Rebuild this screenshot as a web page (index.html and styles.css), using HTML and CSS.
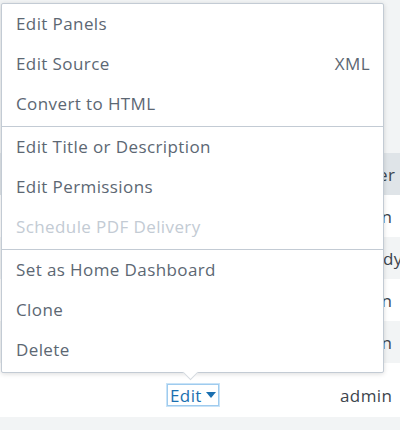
FILE: index.html
```html
<!DOCTYPE html>
<html>
<head>
<meta charset="utf-8">
<link rel="stylesheet" href="styles.css">
</head>
<body>
<div class="page">
  <div class="table">
    <div class="top-band"></div>
    <div class="row head"><span class="c1"></span><span class="c2">Owner</span></div>
    <div class="row"><span class="c1"></span><span class="c2">admin</span></div>
    <div class="row alt"><span class="c1"></span><span class="c2">nobody</span></div>
    <div class="row"><span class="c1"></span><span class="c2">admin</span></div>
    <div class="row alt"><span class="c1"></span><span class="c2">admin</span></div>
    <div class="row last"><span class="c1"><span class="edit-btn">Edit <span class="caret"></span></span></span><span class="c2">admin</span></div>
    <div class="row alt"></div>
  </div>

  <div class="menu">
    <div class="section">
      <div class="item">Edit Panels</div>
      <div class="item"><span>Edit Source</span><span class="hint">XML</span></div>
      <div class="item">Convert to HTML</div>
    </div>
    <div class="section">
      <div class="item">Edit Title or Description</div>
      <div class="item">Edit Permissions</div>
      <div class="item disabled">Schedule PDF Delivery</div>
    </div>
    <div class="section">
      <div class="item">Set as Home Dashboard</div>
      <div class="item">Clone</div>
      <div class="item">Delete</div>
    </div>
    <div class="arrow"></div>
  </div>
</div>
</body>
</html>
```

FILE: styles.css
```css
html, body {
  margin: 0;
  padding: 0;
  background: #ffffff;
}
body {
  font-family: "Open Sans", "Lato", sans-serif;
  font-size: 17px;
  letter-spacing: 0.4px;
  color: #5c6773;
  overflow: hidden;
}
.page {
  position: relative;
  width: 400px;
  height: 430px;
  overflow: hidden;
}
.table {
  display: flex;
  flex-direction: column;
}
.top-band {
  height: 153px;
  background: #f2f4f5;
}
.row {
  height: 42px;
  display: flex;
  align-items: center;
  background: #ffffff;
  white-space: nowrap;
}
.row.alt { background: #f2f4f5; }
.row.head { background: #dfe4e8; }
.row.last {
  height: 54px;
  box-sizing: border-box;
  padding-top: 10px;
}
.c1 {
  width: 340px;
  flex: none;
}
.row.last .c1 {
  padding-left: 167px;
  box-sizing: border-box;
}
.c2 {
  color: #3c444d;
}
.edit-btn {
  display: inline-flex;
  align-items: center;
  gap: 3px;
  color: #1a6fb0;
  padding: 0 2px;
  height: 20px;
  border: 1px solid #9fcbee;
  box-shadow: 0 0 0 1px #c9e3f7;
}
.caret {
  width: 0;
  height: 0;
  border-left: 5px solid transparent;
  border-right: 5px solid transparent;
  border-top: 6px solid #1a6fb0;
  margin-left: 1px;
}
.menu {
  position: absolute;
  left: 1px;
  top: 3px;
  width: 381px;
  background: #ffffff;
  border: 1px solid #c3cbd4;
  border-radius: 2px;
  box-shadow: 0 1px 5px rgba(0, 0, 0, 0.14);
}
.section {
  padding: 1px 0;
}
.section + .section {
  border-top: 1px solid #c3cbd4;
}
.item {
  height: 40px;
  box-sizing: border-box;
  display: flex;
  align-items: center;
  justify-content: space-between;
  padding: 0 13px 3px 14px;
}
.item.disabled { color: #c3cbd4; }
.hint { color: #5c6773; }
.arrow {
  position: absolute;
  left: 183px;
  bottom: -6px;
  width: 10px;
  height: 10px;
  background: #ffffff;
  border-right: 1px solid #d5dbe0;
  border-bottom: 1px solid #d5dbe0;
  transform: rotate(45deg);
}
```
